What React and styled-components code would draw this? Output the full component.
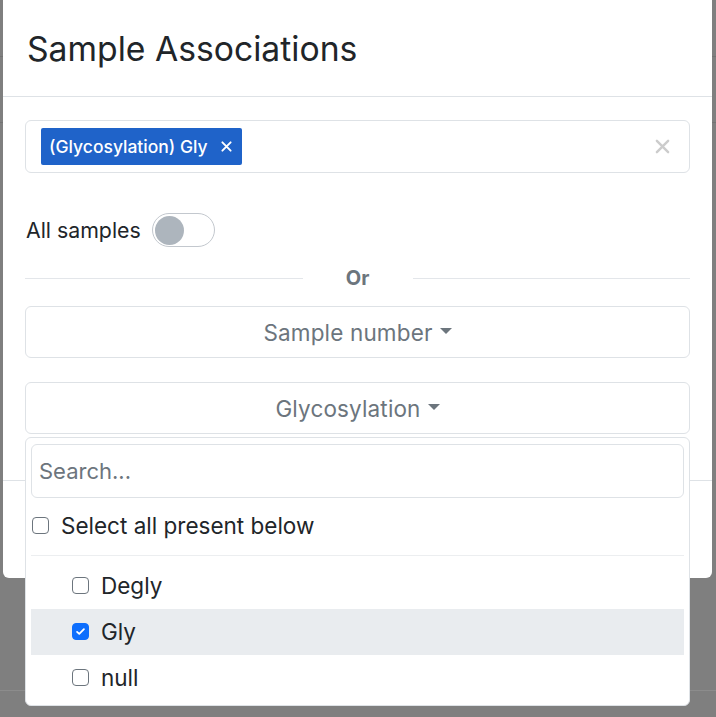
import React, { useState } from "react";
import styled, { createGlobalStyle } from "styled-components";

const GlobalStyle = createGlobalStyle`
  html, body {
    margin: 0;
    padding: 0;
    height: 100%;
    background: #808080;
    overflow: hidden;
  }
  * {
    box-sizing: border-box;
  }
`;

const FONT = `"Inter", "Liberation Sans", sans-serif`;

const Backdrop = styled.div`
  position: relative;
  width: 716px;
  height: 717px;
  background: #7f7f7f;
  font-family: ${FONT};
`;

const PageLine = styled.div`
  position: absolute;
  left: 0;
  right: 0;
  top: ${(p) => p.top}px;
  height: 1px;
  background: ${(p) => p.color || "#737373"};
`;

const Modal = styled.div`
  position: absolute;
  left: 3px;
  top: 0;
  width: 709px;
  height: 578px;
  background: #fff;
  border-radius: 0 0 6px 6px;
  display: flex;
  flex-direction: column;
`;

const Header = styled.div`
  height: 97px;
  padding: 0 24px;
  display: flex;
  align-items: center;
  border-bottom: 1px solid #dee2e6;
`;

const Title = styled.h1`
  margin: 0;
  font-weight: 400;
  font-size: 33.7px;
  color: #212529;
`;

const Body = styled.div`
  padding: 23px 22px 0 22px;
  height: 383px;
  display: flex;
  flex-direction: column;
`;

const Footer = styled.div`
  flex: 1;
  border-top: 1px solid #dee2e6;
`;

const SelectControl = styled.div`
  height: 53px;
  border: 1px solid #dee2e6;
  border-radius: 6px;
  display: flex;
  align-items: center;
  padding: 0 19px 0 15px;
`;

const Chip = styled.div`
  height: 37px;
  background: #1f63c9;
  border-radius: 2px;
  color: #fff;
  font-size: 17.5px;
  font-weight: 500;
  display: flex;
  align-items: center;
  padding: 0 10px 0 8px;
  gap: 13px;
`;

const Spacer = styled.div`
  flex: 1;
`;

const XIcon = ({ size, color, weight }) => (
  <svg width={size} height={size} viewBox="0 0 16 16">
    <path d="M2 2L14 14M14 2L2 14" stroke={color} strokeWidth={weight} strokeLinecap="round" />
  </svg>
);

const SwitchRow = styled.label`
  margin-top: 40px;
  height: 34px;
  display: flex;
  align-items: center;
  gap: 11px;
  font-size: 21.3px;
  color: #212529;
  padding-left: 1px;
`;

const Switch = styled.span`
  width: 63px;
  height: 34px;
  border: 1px solid #c3c8ce;
  border-radius: 17px;
  display: flex;
  align-items: center;
  padding-left: 2px;
`;

const Knob = styled.span`
  width: 29px;
  height: 29px;
  border-radius: 50%;
  background: #adb5bd;
`;

const Divider = styled.div`
  margin-top: 19px;
  height: 24px;
  line-height: 24px;
  display: flex;
  align-items: center;
  color: #6c757d;
  font-weight: 700;
  font-size: 20px;
  &::before,
  &::after {
    content: "";
    flex: 1;
    height: 1px;
    background: #e3e6ea;
  }
`;

const DividerText = styled.span`
  width: 110px;
  text-align: center;
`;

const DropWrap = styled.div`
  position: relative;
  margin-top: ${(p) => p.mt}px;
`;

const DropButton = styled.button`
  height: 52px;
  width: 100%;
  border: 1px solid #dee2e6;
  border-radius: 6px;
  background: #fff;
  color: #6c757d;
  font-family: ${FONT};
  font-size: 22.5px;
  letter-spacing: 0.15px;
  display: flex;
  align-items: center;
  justify-content: center;
  gap: 7px;
  &::after {
    content: "";
    border-top: 6px solid #6c757d;
    border-left: 6px solid transparent;
    border-right: 6px solid transparent;
    margin-top: -3px;
  }
`;

const Menu = styled.div`
  position: absolute;
  left: 0;
  right: 0;
  top: 55px;
  height: 269px;
  background: #fff;
  border: 1px solid #dee2e6;
  border-radius: 6px;
  padding: 6px 5px;
  z-index: 2;
`;

const Search = styled.input`
  width: 100%;
  height: 54px;
  border: 1px solid #dee2e6;
  border-radius: 6px;
  padding: 0 7px;
  font-family: ${FONT};
  font-size: 22px;
  color: #212529;
  &::placeholder {
    color: #6c757d;
  }
`;

const CheckRow = styled.label`
  display: flex;
  align-items: center;
  gap: 12px;
  height: ${(p) => p.h || 46}px;
  padding-left: ${(p) => p.indent}px;
  padding-bottom: 2px;
  background: ${(p) => (p.active ? "#e9ecef" : "transparent")};
  border-bottom: ${(p) => (p.sep ? "1px solid #eceef0" : "none")};
  margin-bottom: ${(p) => (p.sep ? 7 : 0)}px;
  font-size: 22.5px;
  color: #212529;
`;

const Box = styled.span`
  width: 17px;
  height: 17px;
  border-radius: 4px;
  border: 1px solid ${(p) => (p.checked ? "#0d6efd" : "#6c757d")};
  background: ${(p) => (p.checked ? "#0d6efd" : "#fff")};
  display: flex;
  align-items: center;
  justify-content: center;
  flex: none;
`;

const Check = ({ checked }) => (
  <Box checked={checked}>
    {checked && (
      <svg width="11" height="11" viewBox="0 0 16 16">
        <path d="M3 8.5l3.2 3L13 4.5" fill="none" stroke="#fff" strokeWidth="2.6" strokeLinecap="round" strokeLinejoin="round" />
      </svg>
    )}
  </Box>
);

const values = ["Degly", "Gly", "null"];

export default function App() {
  const [picked] = useState(["Gly"]);
  return (
    <Backdrop>
      <GlobalStyle />
      <PageLine top={56} />
      <PageLine top={122} />
      <PageLine top={690} color="#8c8c8c" />
      <Modal>
        <Header>
          <Title>Sample Associations</Title>
        </Header>
        <Body>
          <SelectControl>
            <Chip>
              (Glycosylation) Gly <XIcon size={11} color="#fff" weight={2.8} />
            </Chip>
            <Spacer />
            <XIcon size={15} color="#cccccc" weight={2.6} />
          </SelectControl>
          <SwitchRow>
            All samples
            <Switch>
              <Knob />
            </Switch>
          </SwitchRow>
          <Divider>
            <DividerText>Or</DividerText>
          </Divider>
          <DropWrap mt={16}>
            <DropButton>Sample number</DropButton>
          </DropWrap>
          <DropWrap mt={24}>
            <DropButton>Glycosylation</DropButton>
            <Menu>
              <Search placeholder="Search..." />
              <CheckRow h={58} indent={1} sep>
                <Check />
                Select all present below
              </CheckRow>
              {values.map((v) => (
                <CheckRow key={v} indent={41} active={picked.includes(v)}>
                  <Check checked={picked.includes(v)} />
                  {v}
                </CheckRow>
              ))}
            </Menu>
          </DropWrap>
        </Body>
        <Footer />
      </Modal>
    </Backdrop>
  );
}
